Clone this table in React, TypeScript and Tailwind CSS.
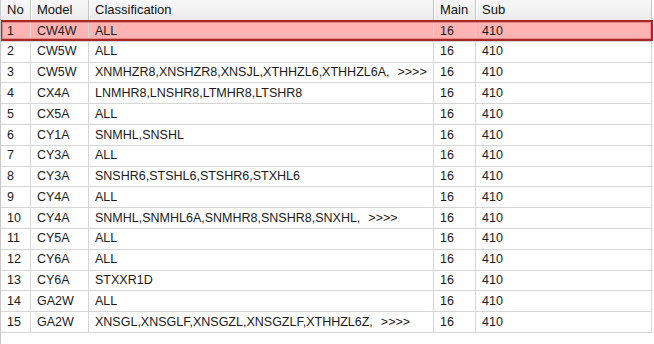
import React from "react";

type Row = { no: number; model: string; cls: string; more?: boolean; main: string; sub: string };

const rows: Row[] = [
  { no: 1, model: "CW4W", cls: "ALL", main: "16", sub: "410" },
  { no: 2, model: "CW5W", cls: "ALL", main: "16", sub: "410" },
  { no: 3, model: "CW5W", cls: "XNMHZR8,XNSHZR8,XNSJL,XTHHZL6,XTHHZL6A,", more: true, main: "16", sub: "410" },
  { no: 4, model: "CX4A", cls: "LNMHR8,LNSHR8,LTMHR8,LTSHR8", main: "16", sub: "410" },
  { no: 5, model: "CX5A", cls: "ALL", main: "16", sub: "410" },
  { no: 6, model: "CY1A", cls: "SNMHL,SNSHL", main: "16", sub: "410" },
  { no: 7, model: "CY3A", cls: "ALL", main: "16", sub: "410" },
  { no: 8, model: "CY3A", cls: "SNSHR6,STSHL6,STSHR6,STXHL6", main: "16", sub: "410" },
  { no: 9, model: "CY4A", cls: "ALL", main: "16", sub: "410" },
  { no: 10, model: "CY4A", cls: "SNMHL,SNMHL6A,SNMHR8,SNSHR8,SNXHL,", more: true, main: "16", sub: "410" },
  { no: 11, model: "CY5A", cls: "ALL", main: "16", sub: "410" },
  { no: 12, model: "CY6A", cls: "ALL", main: "16", sub: "410" },
  { no: 13, model: "CY6A", cls: "STXXR1D", main: "16", sub: "410" },
  { no: 14, model: "GA2W", cls: "ALL", main: "16", sub: "410" },
  { no: 15, model: "GA2W", cls: "XNSGL,XNSGLF,XNSGZL,XNSGZLF,XTHHZL6Z,", more: true, main: "16", sub: "410" },
];

const cell = "flex items-center pl-[6px] border-r border-[#d6d6d6] overflow-hidden whitespace-pre";
const head = "flex items-center pl-[6px] border-r border-[#c4c4c4] shadow-[inset_1px_0_0_#ffffff]";

export default function App() {
  return (
    <div
      className="w-[654px] h-[344px] bg-white text-[12.5px] text-[#1a1a1a] border-l border-[#c8c8c8] overflow-hidden"
      style={{ fontFamily: '"Liberation Sans", Arial, sans-serif' }}
    >
      <div className="w-[651px] flex h-[21px] bg-gradient-to-b from-[#f7f7f7] to-[#ececec] border-b border-[#d0d0d0] text-[13px] text-[#111]">
        <div className={`${head} w-[30px]`}>No</div>
        <div className={`${head} w-[58px]`}>Model</div>
        <div className={`${head} w-[345px]`}>Classification</div>
        <div className={`${head} w-[42px]`}>Main</div>
        <div className={`${head} w-[176px]`}>Sub</div>
      </div>
      {rows.map((r, i) => (
        <div
          key={r.no}
          className={`relative w-[651px] flex h-[20.8px] border-b border-[#d6d6d6] ${i === 0 ? "bg-[#ffb3b3]" : ""}`}
        >
          <div className={`${cell} w-[30px]`}>{r.no}</div>
          <div className={`${cell} w-[58px]`}>{r.model}</div>
          <div className={`${cell} w-[345px]`}>
            {r.cls}
            {r.more ? <span className="pl-[8px]">{">>>>"}</span> : null}
          </div>
          <div className={`${cell} w-[42px]`}>{r.main}</div>
          <div className={`${cell} w-[176px]`}>{r.sub}</div>
          {i === 0 ? (
            <div className="absolute -top-[1px] bottom-0 -left-[1px] -right-[1px] border-2 border-[#a82828] shadow-[inset_0_0_0_1px_#e88a8a]" />
          ) : null}
        </div>
      ))}
    </div>
  );
}
